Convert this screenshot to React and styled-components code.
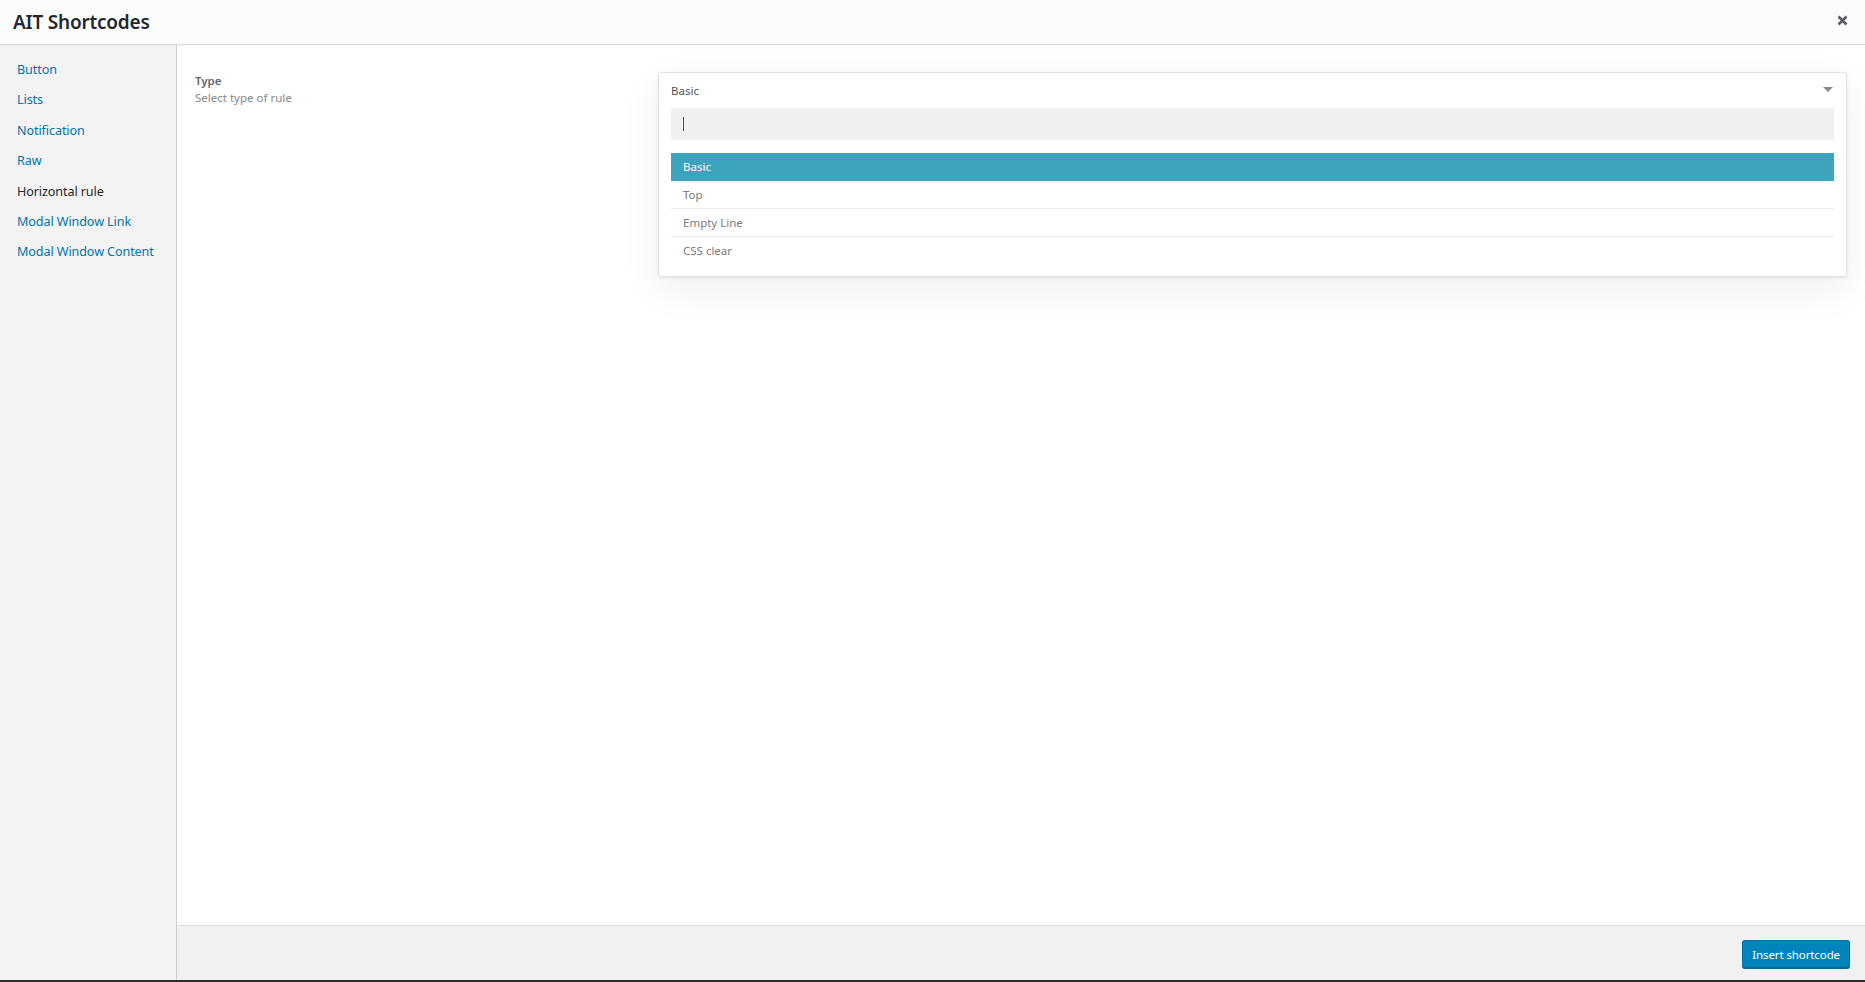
import React, { useState } from "react";
import styled, { createGlobalStyle } from "styled-components";

const GlobalStyle = createGlobalStyle`
  html, body {
    margin: 0;
    padding: 0;
    height: 100%;
  }
  body {
    font-family: "Noto Sans", "Open Sans", sans-serif;
    color: #444;
  }
  #root {
    height: 100%;
  }
`;

const items = [
  "Button",
  "Lists",
  "Notification",
  "Raw",
  "Horizontal rule",
  "Modal Window Link",
  "Modal Window Content",
];

const options = ["Basic", "Top", "Empty Line", "CSS clear"];

export default function App() {
  const [active, setActive] = useState("Horizontal rule");
  const [selected, setSelected] = useState("Basic");

  return (
    <Modal>
      <GlobalStyle />
      <Header>
        <Title>AIT Shortcodes</Title>
        <CloseButton aria-label="Close">
          <svg width="11" height="11" viewBox="0 0 11 11">
            <path
              d="M1.5 1.5 L9.5 9.5 M9.5 1.5 L1.5 9.5"
              stroke="#555d66"
              strokeWidth="2.6"
              strokeLinecap="butt"
            />
          </svg>
        </CloseButton>
      </Header>
      <Body>
        <Sidebar>
          {items.map((item) => (
            <MenuItem
              key={item}
              $active={item === active}
              onClick={() => setActive(item)}
            >
              {item}
            </MenuItem>
          ))}
        </Sidebar>
        <Main>
          <Content>
            <FieldRow>
              <Label>
                <strong>Type</strong>
                <span>Select type of rule</span>
              </Label>
              <Dropdown>
                <DropdownHead>
                  {selected}
                  <Arrow />
                </DropdownHead>
                <Search>
                  <Caret />
                </Search>
                <OptionList>
                  {options.map((opt) => (
                    <Option
                      key={opt}
                      $highlighted={opt === selected}
                      onClick={() => setSelected(opt)}
                    >
                      {opt}
                    </Option>
                  ))}
                </OptionList>
              </Dropdown>
            </FieldRow>
          </Content>
          <Footer>
            <InsertButton>Insert shortcode</InsertButton>
          </Footer>
        </Main>
      </Body>
    </Modal>
  );
}

const Modal = styled.div`
  height: 100%;
  box-sizing: border-box;
  display: flex;
  flex-direction: column;
  border-bottom: 2px solid #2b2b2b;
`;

const Header = styled.div`
  height: 44px;
  flex-shrink: 0;
  display: flex;
  align-items: center;
  justify-content: space-between;
  padding: 0 13px 0 13px;
  background: #fcfcfc;
  border-bottom: 1px solid #ddd;
  box-shadow: 0 1px 0 rgba(0, 0, 0, 0.04);
  position: relative;
  z-index: 1;
`;

const Title = styled.h1`
  margin: 0;
  font-size: 19px;
  font-weight: 600;
  color: #23282d;
  letter-spacing: -0.2px;
`;

const CloseButton = styled.button`
  border: none;
  background: none;
  padding: 0;
  width: 20px;
  height: 20px;
  display: flex;
  align-items: center;
  justify-content: center;
  cursor: pointer;
  margin-top: -4px;
`;

const Body = styled.div`
  flex: 1;
  display: flex;
  min-height: 0;
`;

const Sidebar = styled.nav`
  width: 176px;
  flex-shrink: 0;
  background: #f3f3f3;
  border-right: 1px solid #ccc;
  padding-top: 10px;
  display: flex;
  flex-direction: column;
`;

const MenuItem = styled.a`
  display: block;
  padding: 5px 17px;
  line-height: 20.4px;
  font-size: 12.6px;
  letter-spacing: -0.1px;
  color: ${(p) => (p.$active ? "#23282d" : "#0073aa")};
  text-decoration: none;
  cursor: pointer;
`;

const Main = styled.div`
  flex: 1;
  display: flex;
  flex-direction: column;
  min-width: 0;
`;

const Content = styled.div`
  flex: 1;
  background: #fff;
  padding: 27px 18px 0 18px;
`;

const FieldRow = styled.div`
  display: grid;
  grid-template-columns: 463px 1fr;
  align-items: start;
`;

const Label = styled.div`
  display: flex;
  flex-direction: column;
  font-size: 11.5px;
  line-height: 16.5px;
  padding-top: 1px;

  strong {
    font-weight: 600;
    color: #666;
  }
  span {
    color: #888;
  }
`;

const Dropdown = styled.div`
  background: #fff;
  border: 1px solid #e2e2e2;
  border-radius: 2px;
  padding-bottom: 12px;
  box-shadow: 0 12px 40px rgba(0, 0, 0, 0.07), 0 1px 3px rgba(0, 0, 0, 0.08);
`;

const DropdownHead = styled.div`
  height: 35px;
  display: flex;
  align-items: center;
  justify-content: space-between;
  padding: 0 13px 0 12px;
  font-size: 11.5px;
  color: #555;
`;

const Arrow = styled.span`
  width: 0;
  height: 0;
  border-left: 5px solid transparent;
  border-right: 5px solid transparent;
  border-top: 5px solid #888;
  margin-top: -3px;
`;

const Search = styled.div`
  margin: 0 12px;
  height: 32px;
  background: #f0f0f0;
  border-radius: 2px;
  display: flex;
  align-items: center;
  padding-left: 12px;
`;

const Caret = styled.span`
  width: 1px;
  height: 14px;
  background: #555;
`;

const OptionList = styled.ul`
  list-style: none;
  margin: 13px 12px 0 12px;
  padding: 0;
`;

const Option = styled.li`
  height: 27px;
  display: flex;
  align-items: center;
  padding-left: 12px;
  font-size: 11.5px;
  color: ${(p) => (p.$highlighted ? "#fff" : "#7d7a80")};
  background: ${(p) => (p.$highlighted ? "#3ca4bd" : "transparent")};
  border-bottom: 1px solid ${(p) => (p.$highlighted ? "#3ca4bd" : "#ececec")};
  cursor: pointer;

  &:last-child {
    border-bottom: none;
  }
`;

const Footer = styled.div`
  height: 55px;
  flex-shrink: 0;
  background: #f1f1f1;
  border-top: 1px solid #ddd;
  display: flex;
  justify-content: flex-end;
  align-items: flex-start;
  padding: 14px 15px 0 0;
  box-sizing: border-box;
`;

const InsertButton = styled.button`
  height: 28px;
  padding: 0 9px;
  background: #0085ba;
  border: 1px solid #0073aa;
  border-bottom-color: #006799;
  border-radius: 3px;
  box-shadow: 0 1px 0 #006799;
  color: #fff;
  font-family: "Noto Sans", "Open Sans", sans-serif;
  font-size: 11.5px;
  letter-spacing: -0.1px;
  cursor: pointer;
`;
